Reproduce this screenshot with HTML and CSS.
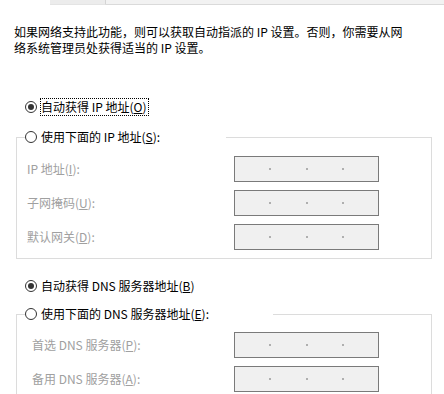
FILE: index.html
```html
<!DOCTYPE html>
<html lang="zh-CN">
<head>
<meta charset="utf-8">
<title>IP 设置</title>
<link rel="stylesheet" href="styles.css">
</head>
<body>
<div class="tabs">
  <div class="tab-active"></div>
  <div class="tab"></div>
  <div class="tabs-rest"></div>
</div>
<div class="page">
  <p class="desc">如果网络支持此功能，则可以获取自动指派的 IP 设置。否则，你需要从网<br>络系统管理员处获得适当的 IP 设置。</p>

  <div class="radio-row first">
    <span class="radio checked"></span><span class="focus">自动获得 IP 地址(<u>O</u>)</span>
  </div>

  <fieldset class="group group-ip">
    <legend class="legend legend-ip"><span class="legend-inner"><span class="radio"></span><span class="radio-text">使用下面的 IP 地址(<u>S</u>):</span></span></legend>
    <div class="field first-field">
      <span class="label">IP 地址(<u>I</u>):</span>
      <span class="ipbox"><span class="seg"></span><span class="dot"></span><span class="seg"></span><span class="dot"></span><span class="seg"></span><span class="dot"></span><span class="seg"></span></span>
    </div>
    <div class="field">
      <span class="label">子网掩码(<u>U</u>):</span>
      <span class="ipbox"><span class="seg"></span><span class="dot"></span><span class="seg"></span><span class="dot"></span><span class="seg"></span><span class="dot"></span><span class="seg"></span></span>
    </div>
    <div class="field">
      <span class="label">默认网关(<u>D</u>):</span>
      <span class="ipbox"><span class="seg"></span><span class="dot"></span><span class="seg"></span><span class="dot"></span><span class="seg"></span><span class="dot"></span><span class="seg"></span></span>
    </div>
  </fieldset>

  <div class="radio-row dns-auto">
    <span class="radio checked"></span><span class="radio-text">自动获得 DNS 服务器地址(<u>B</u>)</span>
  </div>

  <fieldset class="group group-dns">
    <legend class="legend legend-dns"><span class="legend-inner"><span class="radio"></span><span class="radio-text">使用下面的 DNS 服务器地址(<u>E</u>):</span></span></legend>
    <div class="field first-field">
      <span class="label">首选 DNS 服务器(<u>P</u>):</span>
      <span class="ipbox"><span class="seg"></span><span class="dot"></span><span class="seg"></span><span class="dot"></span><span class="seg"></span><span class="dot"></span><span class="seg"></span></span>
    </div>
    <div class="field">
      <span class="label">备用 DNS 服务器(<u>A</u>):</span>
      <span class="ipbox"><span class="seg"></span><span class="dot"></span><span class="seg"></span><span class="dot"></span><span class="seg"></span><span class="dot"></span><span class="seg"></span></span>
    </div>
  </fieldset>
</div>
</body>
</html>
```
FILE: styles.css
```css
html, body {
  margin: 0;
  padding: 0;
  background: #ffffff;
  overflow: hidden;
}

body {
  font-family: "Noto Sans CJK SC", "Microsoft YaHei", "Noto Sans", sans-serif;
  font-size: 12px;
  line-height: 16px;
  color: #000000;
}

.tabs {
  display: flex;
  height: 5px;
}

.tab-active {
  width: 50px;
  background: #ffffff;
}

.tab {
  width: 55px;
  background: #ececec;
  border-right: 1px solid #d4d4d4;
  border-bottom: 1px solid #e4e4e4;
}

.tabs-rest {
  flex: 1;
  background: #f2f2f2;
  border-bottom: 1px solid #dadada;
}

.page {
  display: flex;
  flex-direction: column;
}

.desc {
  margin: 19px 0 0 14px;
  line-height: 16px;
}

u {
  text-decoration: underline;
  text-underline-offset: 1px;
}

.radio-row {
  display: flex;
  align-items: center;
  height: 18px;
  margin-left: 25px;
}

.radio-row.first {
  margin-top: 42px;
}

.radio-row.dns-auto {
  margin-top: 18px;
}

.radio {
  box-sizing: border-box;
  width: 12px;
  height: 12px;
  border: 1px solid #333333;
  border-radius: 50%;
  background: #ffffff;
  display: flex;
  align-items: center;
  justify-content: center;
  flex: none;
  margin-right: 4px;
}

.radio.checked::after {
  content: "";
  width: 6px;
  height: 6px;
  border-radius: 50%;
  background: #333333;
}

.focus {
  box-sizing: border-box;
  height: 18px;
  border: 1px dotted #000000;
  padding: 0 1px 0 0;
  margin-left: -1px;
  line-height: 16px;
}

.group {
  margin: 12px 12px 0 16px;
  border: 1px solid #dcdcdc;
  padding: 0 0 8px 8px;
  min-width: 0;
}

.legend {
  padding: 0;
  height: 18px;
}

.legend-inner {
  display: flex;
  align-items: center;
  height: 18px;
}

.legend-ip {
  width: 201px;
}

.legend-dns {
  width: 248px;
}

.group-dns {
  margin-top: 10px;
  padding-bottom: 4px;
}

.field {
  display: grid;
  grid-template-columns: 207px 145px;
  align-items: center;
  height: 26px;
  margin-top: 8px;
  padding-left: 2px;
}

.field.first-field {
  margin-top: 10px;
}

.group-dns .field.first-field {
  margin-top: 9px;
}

.group-dns .field {
  grid-template-columns: 202px 145px;
  padding-left: 7px;
}

.label {
  color: #a0a0a0;
}

.ipbox {
  box-sizing: border-box;
  height: 26px;
  border: 1px solid #7a7a7a;
  background: #f0f0f0;
  display: flex;
  align-items: center;
}

.seg {
  flex: 1;
}

.dot {
  width: 2px;
  height: 2px;
  background: #9a9a9a;
  border-radius: 1px;
  flex: none;
}
```
